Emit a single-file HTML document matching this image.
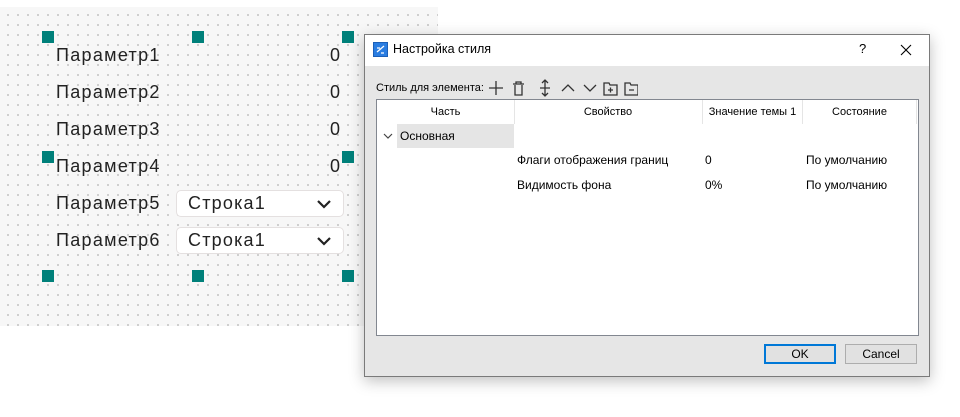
<!DOCTYPE html><html><head><style>
body{margin:0;width:960px;height:417px;background:#fff;position:relative;overflow:hidden;font-family:"Liberation Sans",sans-serif}
.canvas{position:absolute;left:0;top:7px;width:438px;height:319px;background-color:#f7f7f7;background-image:radial-gradient(circle,#9a9a9a 0.6px,transparent 0.9px);background-size:10px 10px;background-position:3px 3px}
.h{position:absolute;width:12px;height:12px;background:#00807a}
.p{position:absolute;left:56px;font-size:18px;color:#222;letter-spacing:1.3px}
.z{position:absolute;left:330px;font-size:18px;color:#222}
.cb{position:absolute;left:176px;width:166px;height:25px;border:1px solid #e4e0e0;border-radius:5px;background:#fff}
.cb span{position:absolute;left:11px;top:2px;font-size:18px;color:#222;letter-spacing:1.2px}
.dlg{position:absolute;left:364px;top:34px;width:566px;height:343px;background:#e6e6e6;border:1px solid #7a7a7a;box-sizing:border-box;box-shadow:0 4px 14px rgba(0,0,0,.25)}
.tb{position:absolute;left:0;top:0;right:0;height:31px;background:#fff}
.s{font-size:12px;color:#000;position:absolute;white-space:nowrap}
.tbl{position:absolute;left:11px;top:64px;width:543px;height:237px;background:#fff;border:1px solid #828790;box-sizing:border-box}
.hd{position:absolute;top:0;height:24px;border-right:1px solid #e5e5e5;font-size:11px;text-align:center;line-height:24px}
.btn{position:absolute;top:309px;width:72px;height:20px;box-sizing:border-box;font-size:12px;text-align:center;line-height:18px;background:#e1e1e1}
</style></head><body>
<div class="canvas"></div>
<div class="h" style="left:42px;top:31px"></div><div class="h" style="left:192px;top:31px"></div><div class="h" style="left:342px;top:31px"></div>
<div class="h" style="left:42px;top:151px"></div><div class="h" style="left:342px;top:151px"></div>
<div class="h" style="left:42px;top:270px"></div><div class="h" style="left:192px;top:270px"></div><div class="h" style="left:342px;top:270px"></div>
<div class="p" style="top:45px">Параметр1</div><div class="z" style="top:45px">0</div>
<div class="p" style="top:82px">Параметр2</div><div class="z" style="top:82px">0</div>
<div class="p" style="top:119px">Параметр3</div><div class="z" style="top:119px">0</div>
<div class="p" style="top:156px">Параметр4</div><div class="z" style="top:156px">0</div>
<div class="p" style="top:193px">Параметр5</div>
<div class="p" style="top:230px">Параметр6</div>
<div class="cb" style="top:190px"><span>Строка1</span><svg style="position:absolute;left:140px;top:8px" width="14" height="10"><path d="M1 2l6 6 6-6" stroke="#222" stroke-width="2.2" fill="none"/></svg></div>
<div class="cb" style="top:227px"><span>Строка1</span><svg style="position:absolute;left:140px;top:8px" width="14" height="10"><path d="M1 2l6 6 6-6" stroke="#222" stroke-width="2.2" fill="none"/></svg></div>
<div class="dlg">
<div class="tb">
<svg style="position:absolute;left:8px;top:7px" width="15" height="15"><rect x="0.5" y="0.5" width="14" height="14" fill="#2a7de1" stroke="#1b5fb8"/><path d="M4 10l7-6M4 6h3M8 11h3" stroke="#fff" stroke-width="1.3"/></svg>
<div class="s" style="left:28px;top:7px;font-size:12.5px">Настройка стиля</div>
<div class="s" style="left:494px;top:6px;font-size:13px">?</div>
<svg style="position:absolute;left:535px;top:9px" width="12" height="12"><path d="M1 1l10 10M11 1L1 11" stroke="#000" stroke-width="1.1"/></svg>
</div>
<div class="s" style="left:11px;top:47px;font-size:11px">Стиль для элемента:</div>
<svg style="position:absolute;left:123px;top:44px" width="150" height="18" fill="none" stroke="#333" stroke-width="1.3">
<path d="M8 2v14M1 9h14"/>
<path d="M25 5h11M28 5V3h5v2M27 6v10h7V6"/>
<path d="M57 1v16M54 4l3-3 3 3M54 14l3 3 3-3M52 9h10"/>
<path d="M74 12l6-6 6 6"/><path d="M96 6l6 6 6-6"/>
<path d="M116 4h5l1 2h7v10h-13z M120 11h5M122.5 8.5v5"/>
<path d="M137 4h5l1 2h7v10h-13z M141 11h5"/>
</svg>
<div class="tbl">
<div class="hd" style="left:0;width:137px">Часть</div>
<div class="hd" style="left:137px;width:188px">Свойство</div>
<div class="hd" style="left:326px;width:99px">Значение темы 1</div>
<div class="hd" style="left:426px;width:113px">Состояние</div>
<svg style="position:absolute;left:6px;top:32px" width="10" height="8"><path d="M1 2l4 4 4-4" stroke="#444" stroke-width="1.2" fill="none"/></svg>
<div style="position:absolute;left:20px;top:24px;width:117px;height:24px;background:#e5e5e5"></div>
<div class="s" style="left:23px;top:29px">Основная</div>
<div class="s" style="left:140px;top:53px">Флаги отображения границ</div>
<div class="s" style="left:328px;top:53px">0</div>
<div class="s" style="left:429px;top:53px">По умолчанию</div>
<div class="s" style="left:140px;top:78px">Видимость фона</div>
<div class="s" style="left:328px;top:78px">0%</div>
<div class="s" style="left:429px;top:78px">По умолчанию</div>
</div>
<div class="btn" style="left:399px;border:2px solid #0078d7;line-height:16px">OK</div>
<div class="btn" style="left:480px;border:1px solid #adadad">Cancel</div>
</div>
</body></html>
